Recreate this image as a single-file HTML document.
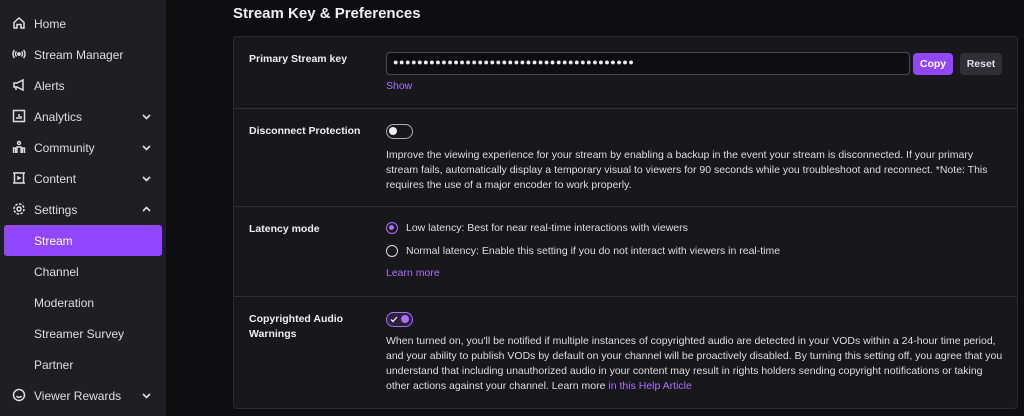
<!DOCTYPE html>
<html><head><meta charset="utf-8"><style>
*{box-sizing:border-box;margin:0;padding:0}
body{width:1024px;height:416px;overflow:hidden;background:#0e0e10;font-family:"Liberation Sans",sans-serif;color:#efeff1;position:relative}
.side{position:absolute;left:0;top:0;width:166px;height:416px;background:#1f1f23}
.nav{position:absolute;left:0;width:166px;height:31px;font-size:12px;color:#dedee3;display:flex;align-items:center}
.nav .ic{position:absolute;left:12px;top:8px;width:14px;height:14px}
.nav .t{position:absolute;left:34px}
.nav .ch{position:absolute;left:141px;top:10px;width:11px;height:11px}
.act{left:4px!important;width:158px!important;background:#9147ff;border-radius:3px;color:#fff}
.act .t{left:30px}
h1{position:absolute;left:233px;top:5px;font-size:15px;font-weight:bold;color:#efeff1}
.card{position:absolute;left:233px;top:36px;width:785px;height:373px;background:#18181b;border:1px solid #2a2a2e;border-radius:4px}
.div{position:absolute;left:0;width:783px;height:1px;background:#2f2f35}
.lbl{position:absolute;left:15px;font-size:10.5px;font-weight:bold;line-height:15px;color:#efeff1}
.txt{position:absolute;left:152px;font-size:10.5px;line-height:15px;color:#dedee3;white-space:nowrap}
.p{color:#a970ff}
</style></head><body>
<div class="side">
<div class="nav" style="top:8px"><svg class="ic" viewBox="0 0 14 14" fill="none" stroke="#dedee3" stroke-width="1.5"><path d="M2 6.5L7 2l5 4.5V12H9V8.5H5V12H2z"/></svg><span class="t">Home</span></div>
<div class="nav" style="top:39px"><svg class="ic" viewBox="0 0 14 14" fill="none" stroke="#dedee3" stroke-width="1.4"><circle cx="7" cy="7" r="1.2" fill="#dedee3"/><path d="M4.5 4.5a3.5 3.5 0 000 5M9.5 4.5a3.5 3.5 0 010 5M2.5 3a6 6 0 000 8M11.5 3a6 6 0 010 8"/></svg><span class="t">Stream Manager</span></div>
<div class="nav" style="top:70px"><svg class="ic" viewBox="0 0 14 14" fill="none" stroke="#dedee3" stroke-width="1.5"><path d="M2 5h3l6-3v10L5 9H2zM4 9v3"/></svg><span class="t">Alerts</span></div>
<div class="nav" style="top:101px"><svg class="ic" viewBox="0 0 14 14" fill="none" stroke="#dedee3" stroke-width="1.5"><rect x="1.5" y="1.5" width="11" height="11"/><path d="M5 10V8M7 10V5M9 10V7"/></svg><span class="t">Analytics</span><svg class="ch" viewBox="0 0 11 11" fill="none" stroke="#dedee3" stroke-width="1.6"><path d="M2 4l3.5 3.5L9 4"/></svg></div>
<div class="nav" style="top:132px"><svg class="ic" viewBox="0 0 14 14" fill="none" stroke="#dedee3" stroke-width="1.4"><circle cx="7" cy="3" r="1.5"/><path d="M5 13V7h4v6M1.5 13V8h2v5M10.5 13V8h2v5"/></svg><span class="t">Community</span><svg class="ch" viewBox="0 0 11 11" fill="none" stroke="#dedee3" stroke-width="1.6"><path d="M2 4l3.5 3.5L9 4"/></svg></div>
<div class="nav" style="top:163px"><svg class="ic" viewBox="0 0 14 14" fill="none" stroke="#dedee3" stroke-width="1.5"><path d="M1 2h12M1 12h12M2.5 2v10M11.5 2v10"/><path d="M6 6l2 1-2 1z" fill="#dedee3"/></svg><span class="t">Content</span><svg class="ch" viewBox="0 0 11 11" fill="none" stroke="#dedee3" stroke-width="1.6"><path d="M2 4l3.5 3.5L9 4"/></svg></div>
<div class="nav" style="top:194px"><svg class="ic" viewBox="0 0 14 14" fill="none" stroke="#dedee3" stroke-width="1.5"><circle cx="7" cy="7" r="2"/><circle cx="7" cy="7" r="5" stroke-dasharray="2.5 1.4"/></svg><span class="t">Settings</span><svg class="ch" viewBox="0 0 11 11" fill="none" stroke="#dedee3" stroke-width="1.6"><path d="M2 7l3.5-3.5L9 7"/></svg></div>
<div class="nav act" style="top:225px"><span class="t">Stream</span></div>
<div class="nav" style="top:256px"><span class="t">Channel</span></div>
<div class="nav" style="top:287px"><span class="t">Moderation</span></div>
<div class="nav" style="top:318px"><span class="t">Streamer Survey</span></div>
<div class="nav" style="top:349px"><span class="t">Partner</span></div>
<div class="nav" style="top:380px"><svg class="ic" viewBox="0 0 14 14" fill="none" stroke="#dedee3" stroke-width="1.5"><circle cx="7" cy="7" r="5.5"/><path d="M4.5 8a3 3 0 005 0"/></svg><span class="t">Viewer Rewards</span><svg class="ch" viewBox="0 0 11 11" fill="none" stroke="#dedee3" stroke-width="1.6"><path d="M2 4l3.5 3.5L9 4"/></svg></div>
</div>
<h1>Stream Key &amp; Preferences</h1>
<div class="card">
<div class="lbl" style="top:15px">Primary Stream key</div>
<div style="position:absolute;left:152px;top:15px;width:524px;height:23px;border:1px solid #4a4a50;border-radius:4px;background:#0e0e10;font-size:9px;letter-spacing:0.6px;padding:4px 6px;color:#efeff1">●●●●●●●●●●●●●●●●●●●●●●●●●●●●●●●●●●●●●●●●</div>
<div style="position:absolute;left:679px;top:16px;width:40px;height:22px;background:#9147ff;border-radius:4px;font-size:10.5px;font-weight:bold;color:#fff;text-align:center;line-height:22px">Copy</div>
<div style="position:absolute;left:726px;top:16px;width:42px;height:22px;background:#2f2f35;border-radius:4px;font-size:10.5px;font-weight:bold;color:#dedee3;text-align:center;line-height:22px">Reset</div>
<div class="txt p" style="top:42px">Show</div>
<div class="div" style="top:71px"></div>
<div class="lbl" style="top:87px">Disconnect Protection</div>
<div style="position:absolute;left:152px;top:87px;width:27px;height:15px;border:1.5px solid #adadb8;border-radius:8px"><div style="position:absolute;left:2px;top:2px;width:8px;height:8px;border-radius:50%;background:#efeff1"></div></div>
<div class="txt" style="top:111px">Improve the viewing experience for your stream by enabling a backup in the event your stream is disconnected. If your primary<br>stream fails, automatically display a temporary visual to viewers for 90 seconds while you troubleshoot and reconnect. *Note: This<br>requires the use of a major encoder to work properly.</div>
<div class="div" style="top:169px"></div>
<div class="lbl" style="top:185px">Latency mode</div>
<div style="position:absolute;left:152px;top:185px;width:12px;height:12px;border:1.5px solid #a970ff;border-radius:50%"><div style="position:absolute;left:2px;top:2px;width:5px;height:5px;border-radius:50%;background:#a970ff"></div></div>
<div class="txt" style="left:172px;top:184px">Low latency: Best for near real-time interactions with viewers</div>
<div style="position:absolute;left:152px;top:208px;width:12px;height:12px;border:1.5px solid #dedee3;border-radius:50%"></div>
<div class="txt" style="left:172px;top:207px">Normal latency: Enable this setting if you do not interact with viewers in real-time</div>
<div class="txt p" style="top:229px">Learn more</div>
<div class="div" style="top:259px"></div>
<div class="lbl" style="top:275px">Copyrighted Audio<br>Warnings</div>
<div style="position:absolute;left:152px;top:275px;width:27px;height:15px;border:1.5px solid #a970ff;border-radius:8px;background:#2b1f45"><svg style="position:absolute;left:3px;top:3px" width="8" height="7" viewBox="0 0 8 7" fill="none" stroke="#efeff1" stroke-width="1.3"><path d="M1 3.5l2 2L7 1"/></svg><div style="position:absolute;left:14px;top:2px;width:8px;height:8px;border-radius:50%;background:#a970ff"></div></div>
<div class="txt" style="top:297px">When turned on, you'll be notified if multiple instances of copyrighted audio are detected in your VODs within a 24-hour time period,<br>and your ability to publish VODs by default on your channel will be proactively disabled. By turning this setting off, you agree that you<br>understand that including unauthorized audio in your content may result in rights holders sending copyright notifications or taking<br>other actions against your channel. Learn more <span class="p">in this Help Article</span></div>
</div>
</body></html>
